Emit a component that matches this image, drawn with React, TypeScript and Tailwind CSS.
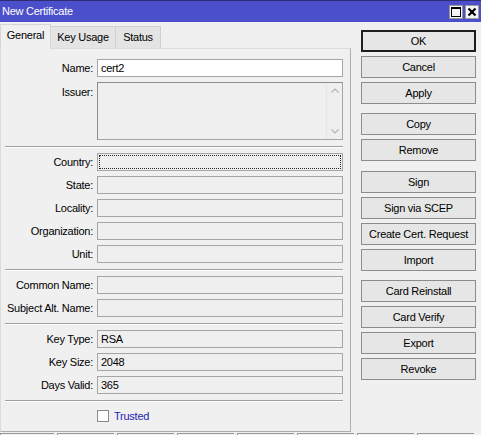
import React from 'react';

type FieldProps = { label: string; value?: string; white?: boolean; focused?: boolean };

const Field: React.FC<FieldProps> = ({ label, value, white, focused }) => (
  <div className="flex items-center h-[18px]">
    <div className="w-[89px] shrink-0 text-right pr-[1px] whitespace-nowrap">{label}</div>
    <div
      className={`ml-[3px] h-[18px] w-[246px] border border-[#a5a5a5] flex items-center pl-[3px] ${white ? 'bg-white border-[#9a9a9a]' : 'bg-[#efefef]'} relative`}
    >
      {value}
      {focused && <div className="absolute inset-[1px] border border-dotted border-[#222]" />}
    </div>
  </div>
);

const Sep = () => (
  <div className="mt-[6px] mb-[5px]">
    <div className="h-px bg-[#a0a0a0]" />
    <div className="h-px bg-white" />
  </div>
);

const Btn: React.FC<{ label: string; primary?: boolean; group?: boolean }> = ({ label, primary, group }) => (
  <div
    className={`h-[22px] flex items-center justify-center bg-[#e6e6e6] ${primary ? 'border-2 border-[#1e1e1e]' : 'border border-[#8c8c8c]'} ${group ? 'mt-[9px]' : 'mt-[4px]'}`}
  >
    {label}
  </div>
);

export default function App() {
  return (
    <div className="w-[481px] h-[435px] overflow-hidden bg-[#f0f0f0] text-[11px] tracking-[-0.25px] text-black font-['Liberation_Sans',Arial,sans-serif] flex flex-col">
      {/* title bar */}
      <div className="h-[22px] shrink-0 bg-[#4b4fcb] border-t border-[#2c2e70] flex items-center justify-between pl-[2px] pr-[2px]">
        <span className="text-white text-[11px]">New Certificate</span>
        <div className="flex gap-[2px]">
          <div className="w-[14px] h-[14px] bg-[#f4f4f4] border border-[#9a9a9a] flex items-center justify-center">
            <svg width="10" height="10" viewBox="0 0 10 10">
              <rect x="0.5" y="0.5" width="9" height="9" fill="none" stroke="#000" strokeWidth="1" />
              <rect x="0" y="0" width="10" height="2" fill="#000" />
            </svg>
          </div>
          <div className="w-[14px] h-[14px] bg-[#f4f4f4] border border-[#9a9a9a] flex items-center justify-center">
            <svg width="10" height="10" viewBox="0 0 10 10">
              <path d="M1.5 1.5 L8.5 8.5 M8.5 1.5 L1.5 8.5" stroke="#000" strokeWidth="2.2" />
            </svg>
          </div>
        </div>
      </div>

      <div className="h-[410px] shrink-0 flex">
        {/* left column */}
        <div className="w-[351px] shrink-0 flex flex-col">
          <div className="h-[26px] flex items-end">
            <div className="relative z-10 -mb-px w-[51px] h-[25px] bg-[#f0f0f0] border-t border-l border-r border-[#d6d6d6] flex items-center justify-center pb-[3px]">
              General
            </div>
            <div className="w-[65px] h-[22px] bg-[#e4e4e4] border-t border-r border-[#d0d0d0] flex items-center justify-center">
              Key Usage
            </div>
            <div className="w-[45px] h-[22px] bg-[#e4e4e4] border-t border-r border-[#d0d0d0] flex items-center justify-center">
              Status
            </div>
          </div>

          <div className="w-[351px] h-[384px] border-t border-l border-[#dcdcdc] border-r border-b border-r-[#acacac] border-b-[#acacac] pt-[10px] pl-[4px] pr-[7px] flex flex-col">
            <Field label="Name:" value="cert2" white />
            <div className="flex mt-[5px]">
              <div className="w-[89px] shrink-0 text-right pr-[1px] pt-[2px]">Issuer:</div>
              <div className="ml-[3px] h-[58px] w-[246px] border border-[#a5a5a5] border-t-[#8c8c8c] border-l-[#8c8c8c] bg-[#efefef] flex justify-end">
                <div className="w-[16px] border-l border-[#e6e6e6] flex flex-col items-center justify-between py-[5px]">
                  <svg width="8" height="5" viewBox="0 0 8 5">
                    <path d="M0.5 4.5 L4 1 L7.5 4.5" fill="none" stroke="#b4b4b4" strokeWidth="1.2" />
                  </svg>
                  <svg width="8" height="5" viewBox="0 0 8 5">
                    <path d="M0.5 0.5 L4 4 L7.5 0.5" fill="none" stroke="#b4b4b4" strokeWidth="1.2" />
                  </svg>
                </div>
              </div>
            </div>

            <Sep />
            <div className="flex flex-col gap-[5px]">
              <Field label="Country:" focused />
              <Field label="State:" />
              <Field label="Locality:" />
              <Field label="Organization:" />
              <Field label="Unit:" />
            </div>

            <Sep />
            <div className="flex flex-col gap-[5px]">
              <Field label="Common Name:" />
              <Field label="Subject Alt. Name:" />
            </div>

            <Sep />
            <div className="flex flex-col gap-[5px]">
              <Field label="Key Type:" value="RSA" />
              <Field label="Key Size:" value="2048" />
              <Field label="Days Valid:" value="365" />
            </div>

            <Sep />
            <div className="flex items-center mt-[1px] ml-[92px]">
              <div className="w-[12px] h-[12px] bg-white border border-[#8a8a8a]" />
              <span className="ml-[5px] text-[#1c1cb4]">Trusted</span>
            </div>
          </div>
        </div>

        {/* right column */}
        <div className="ml-[10px] w-[115px] pt-[4px] flex flex-col">
          <Btn label="OK" primary />
          <Btn label="Cancel" />
          <Btn label="Apply" />
          <Btn label="Copy" group />
          <Btn label="Remove" />
          <div className="h-px" />
          <Btn label="Sign" group />
          <Btn label="Sign via SCEP" />
          <Btn label="Create Cert. Request" />
          <Btn label="Import" />
          <Btn label="Card Reinstall" group />
          <Btn label="Card Verify" />
          <Btn label="Export" />
          <Btn label="Revoke" />
        </div>
      </div>

      {/* status bar */}
      <div className="flex gap-[3px] mt-[1px]">
        {[54, 57, 57, 57, 57, 57, 57, 57].map((w, i) => (
          <div key={i} className="h-[20px] border-t border-l border-[#9a9a9a] shrink-0" style={{ width: w }} />
        ))}
      </div>
    </div>
  );
}
